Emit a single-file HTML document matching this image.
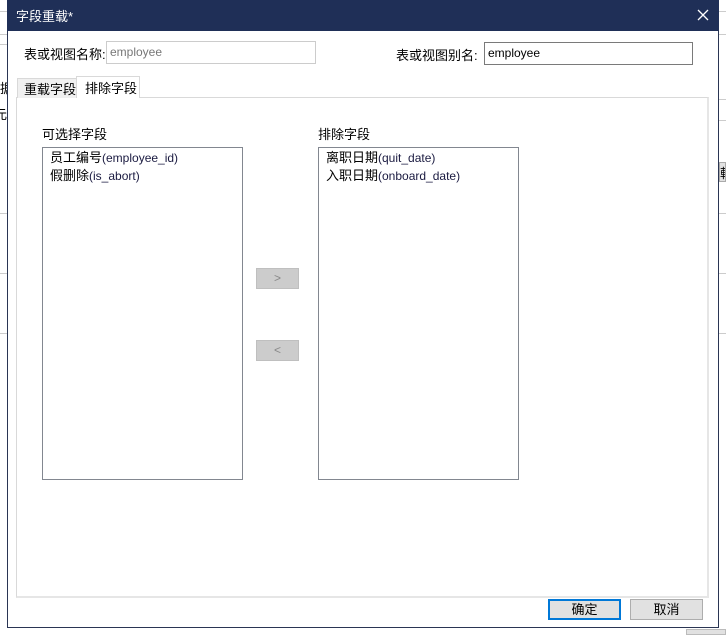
<!DOCTYPE html>
<html><head><meta charset="utf-8"><style>
*{margin:0;padding:0;box-sizing:border-box}
body{width:726px;height:635px;background:#fff;position:relative;overflow:hidden;font-family:"Liberation Sans","Noto Sans CJK SC",sans-serif;font-size:12px;color:#000}
.a{position:absolute}
.ln{position:absolute;height:1px;background:#ccc}
</style></head><body>
<div class="ln" style="left:0;top:11px;width:7px"></div>
<div class="ln" style="left:0;top:34px;width:7px"></div>
<div class="ln" style="left:0;top:44px;width:7px"></div>
<div class="ln" style="left:0;top:213px;width:7px"></div>
<div class="ln" style="left:0;top:273px;width:7px"></div>
<div class="ln" style="left:0;top:333px;width:7px"></div>
<div class="a" style="left:0;top:78px;font-size:13px;width:7px;overflow:hidden">据</div>
<div class="a" style="left:0;top:104px;font-size:13px;width:7px;overflow:hidden;text-indent:-6px">元</div>
<div class="ln" style="left:719px;top:11px;width:7px"></div>
<div class="ln" style="left:719px;top:34px;width:7px"></div>
<div class="ln" style="left:719px;top:99px;width:7px"></div>
<div class="ln" style="left:719px;top:120px;width:7px"></div>
<div class="ln" style="left:719px;top:213px;width:7px"></div>
<div class="ln" style="left:719px;top:273px;width:7px"></div>
<div class="ln" style="left:719px;top:333px;width:7px"></div>
<div class="a" style="left:719px;top:162px;width:7px;height:20px;background:#e1e1e1;border:1px solid #aaa;overflow:hidden;font-size:13px">輯</div>
<div class="a" style="left:686px;top:629px;width:40px;height:6px;background:#e1e1e1;border:1px solid #bbb"></div>

<div class="a" style="left:7px;top:0;width:712px;height:628px;border:1px solid #2a3553;background:#fff"></div>
<div class="a" style="left:7px;top:0;width:712px;height:31px;background:#1f2f57"></div>
<div class="a" style="left:16px;top:6px;color:#fff;font-size:13px">字段重载*</div>
<svg class="a" style="left:697px;top:9px" width="12" height="12"><path d="M1 1L11 11M11 1L1 11" stroke="#fff" stroke-width="1.3"/></svg>

<div class="a" style="left:24px;top:44px;font-size:13px">表或视图名称:</div>
<div class="a" style="left:106px;top:41px;width:210px;height:23px;border:1px solid #ccc;color:#777;padding:3px 3px;font-size:12px">employee</div>
<div class="a" style="left:396px;top:45px;font-size:13px">表或视图别名:</div>
<div class="a" style="left:484px;top:42px;width:209px;height:23px;border:1px solid #7a7a7a;padding:3px 3px;font-size:12px">employee</div>

<div class="a" style="left:16px;top:97px;width:693px;height:501px;border:1px solid #d9d9d9;border-right:2px solid #e6e6e6;border-bottom:2px solid #e6e6e6"></div>
<div class="a" style="left:17px;top:78px;width:60px;height:20px;background:#f0f0f0;border:1px solid #d9d9d9;border-bottom:none;font-size:13px;padding:0 0 0 6px">重载字段</div>
<div class="a" style="left:76px;top:76px;width:64px;height:22px;background:#fff;border:1px solid #d9d9d9;border-bottom:none;font-size:13px;padding:1px 0 0 8px">排除字段</div>

<div class="a" style="left:42px;top:124px;font-size:13px">可选择字段</div>
<div class="a" style="left:42px;top:147px;width:201px;height:333px;border:1px solid #828790;padding:1px 0 0 7px;line-height:18px;font-size:13px">员工编号<span style="font-size:12px;color:#1a1a40">(employee_id)</span><br>假删除<span style="font-size:12px;color:#1a1a40">(is_abort)</span></div>
<div class="a" style="left:318px;top:124px;font-size:13px">排除字段</div>
<div class="a" style="left:318px;top:147px;width:201px;height:333px;border:1px solid #828790;padding:1px 0 0 7px;line-height:18px;font-size:13px">离职日期<span style="font-size:12px;color:#1a1a40">(quit_date)</span><br>入职日期<span style="font-size:12px;color:#1a1a40">(onboard_date)</span></div>

<div class="a" style="left:256px;top:268px;width:43px;height:21px;background:#cccccc;border:1px solid #bfbfbf;color:#888;text-align:center;line-height:19px">&gt;</div>
<div class="a" style="left:256px;top:340px;width:43px;height:21px;background:#cccccc;border:1px solid #bfbfbf;color:#888;text-align:center;line-height:19px">&lt;</div>

<div class="a" style="left:548px;top:599px;width:73px;height:21px;background:#e1e1e1;border:2px solid #0078d7;text-align:center;line-height:17px;font-size:13px">确定</div>
<div class="a" style="left:630px;top:599px;width:73px;height:21px;background:#e1e1e1;border:1px solid #adadad;text-align:center;line-height:19px;font-size:13px">取消</div>
</body></html>
